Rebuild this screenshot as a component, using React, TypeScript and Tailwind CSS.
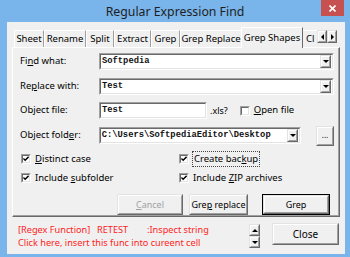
import React from "react";

const UI = "font-['Segoe_UI','Noto_Sans',sans-serif]";
const MONO = "font-['Liberation_Mono','Courier_New',monospace]";

function Sunken({ className = "", children }: { className?: string; children?: React.ReactNode }) {
  return (
    <div className={`border border-t-[#a0a0a0] border-l-[#a0a0a0] border-b-white border-r-white ${className}`}>
      <div className="h-full w-full border border-t-[#696969] border-l-[#696969] border-b-[#e3e3e3] border-r-[#e3e3e3] bg-white flex items-center">
        {children}
      </div>
    </div>
  );
}

function Raised({ className = "", children }: { className?: string; children?: React.ReactNode }) {
  return (
    <div className={`border border-t-[#e3e3e3] border-l-[#e3e3e3] border-b-[#696969] border-r-[#696969] ${className}`}>
      <div className="h-full w-full border border-t-white border-l-white border-b-[#a0a0a0] border-r-[#a0a0a0] bg-[#f0f0f0] flex items-center justify-center whitespace-nowrap">
        {children}
      </div>
    </div>
  );
}

function Tri({ dir }: { dir: "down" | "up" | "left" | "right" }) {
  const pts = {
    down: "0,0 6,0 3,3",
    up: "0,3 6,3 3,0",
    left: "3,0 3,6 0,3",
    right: "0,0 0,6 3,3",
  }[dir];
  const vert = dir === "down" || dir === "up";
  return (
    <svg width={vert ? 6 : 3} height={vert ? 3 : 6} viewBox={vert ? "0 0 6 3" : "0 0 3 6"}>
      <polygon points={pts} fill="#000" />
    </svg>
  );
}

function Combo({ value, className = "" }: { value: string; className?: string }) {
  return (
    <Sunken className={`h-[17px] ${className}`}>
      <span className={`${MONO} flex-1 pl-[1px] text-[8.8px] font-bold text-[#111] leading-none`}>{value}</span>
      <Raised className="w-[11px] h-[13px] mr-[1px]">
        <Tri dir="down" />
      </Raised>
    </Sunken>
  );
}

function Check({ checked }: { checked: boolean }) {
  return (
    <Sunken className="w-[10px] h-[10px] shrink-0">
      {checked && (
        <svg width="6" height="6" viewBox="0 0 7 7">
          <path d="M0.5 3 L2.5 5 L6.5 1" stroke="#000" strokeWidth="1.6" fill="none" />
        </svg>
      )}
    </Sunken>
  );
}

function U({ children }: { children: React.ReactNode }) {
  return <span className="underline underline-offset-[1px]">{children}</span>;
}

const tabs = [
  { label: "Sheet", w: "w-[30px]" },
  { label: "Rename", w: "w-[42px]" },
  { label: "Split", w: "w-[28px]" },
  { label: "Extract", w: "w-[37px]" },
  { label: "Grep", w: "w-[29px]" },
  { label: "Grep Replace", w: "w-[62px]" },
];

export default function App() {
  return (
    <div className={`w-[350px] h-[257px] bg-[#79b4ea] flex flex-col overflow-hidden ${UI}`}>
      {/* title bar */}
      <div className="h-[22px] shrink-0 relative flex items-center justify-center">
        <span className="text-[12.3px] text-[#1e1e1e] mt-[3px]">Regular Expression Find</span>
        <div className="absolute right-[6px] top-0 w-[23px] h-[16px] bg-[#c75050] flex items-center justify-center">
          <svg width="7" height="7" viewBox="0 0 7 7">
            <path d="M0.5 0.5 L6.5 6.5 M6.5 0.5 L0.5 6.5" stroke="#fff" strokeWidth="1.6" />
          </svg>
        </div>
      </div>

      {/* client */}
      <div className="ml-[7px] mr-[5px] mb-[3px] flex-1 bg-[#f0f0f0] flex flex-col px-[5px] text-[9.5px] text-black">
        {/* tab strip */}
        <div className="h-[25px] shrink-0 flex items-end pl-[2px] relative">
          {tabs.map((t) => (
            <div
              key={t.label}
              className={`${t.w} h-[17px] shrink-0 whitespace-nowrap border-t border-l border-t-white border-l-white border-r border-r-[#a0a0a0] flex items-center justify-center`}
            >
              {t.label}
            </div>
          ))}
          <div className="w-[62px] h-[21px] mb-[-1px] shrink-0 -mx-[1px] z-10 bg-[#f0f0f0] whitespace-nowrap border-t border-l border-t-white border-l-white border-r border-r-[#696969] flex items-center justify-center">
            Grep Shapes
          </div>
          <div className="w-[16px] h-[17px] shrink-0 border-t border-l border-t-white border-l-white overflow-hidden pl-[3px] flex items-center">
            Cl
          </div>
          <div className="absolute right-[3px] top-[8px] flex">
            <Raised className="w-[10px] h-[13px]">
              <Tri dir="left" />
            </Raised>
            <Raised className="w-[10px] h-[13px]">
              <Tri dir="right" />
            </Raised>
          </div>
        </div>

        {/* tab page */}
        <div className="h-[170px] shrink-0 border border-t-white border-l-white border-b-[#696969] border-r-[#696969]">
          <div className="h-full border-b border-r border-b-[#a0a0a0] border-r-[#a0a0a0] pl-[7px] pr-[4px] flex flex-col">
            <div className="flex items-center mt-[5px] h-[17px]">
              <span className="w-[79px]">Fi<U>n</U>d what:</span>
              <Combo value="Softpedia" className="w-[235px]" />
            </div>
            <div className="flex items-center mt-[8px] h-[17px]">
              <span className="w-[79px]">Re<U>p</U>lace with:</span>
              <Combo value="Test" className="w-[235px]" />
            </div>
            <div className="flex items-center mt-[7px] h-[17px]">
              <span className="w-[79px]">Object file:</span>
              <Sunken className="w-[108px] h-[17px]">
                <span className={`${MONO} pl-[1px] text-[8.8px] font-bold text-[#111] leading-none`}>Test</span>
              </Sunken>
              <span className="ml-[3px] text-[9px]">.xls?</span>
              <div className="ml-[12px] flex items-center gap-[4px]">
                <Check checked={false} />
                <span><U>O</U>pen file</span>
              </div>
            </div>
            <div className="flex items-center mt-[8px] h-[17px]">
              <span className="w-[79px]">Object fold<U>e</U>r:</span>
              <Combo value="C:\Users\SoftpediaEditor\Desktop" className="w-[203px]" />
              <Raised className="ml-[15px] w-[18px] h-[20px]">
                <span className="text-[8px] leading-none mt-[-2px]">...</span>
              </Raised>
            </div>
            <div className="flex items-center mt-[9px] h-[12px]">
              <div className="w-[159px] flex items-center gap-[4px] pl-[1px]">
                <Check checked />
                <span><U>D</U>istinct case</span>
              </div>
              <div className="flex items-center gap-[4px]">
                <Check checked />
                <span className="outline outline-1 outline-dotted outline-[#444] px-[1px]">Create bac<U>k</U>up</span>
              </div>
            </div>
            <div className="flex items-center mt-[7px] h-[12px]">
              <div className="w-[159px] flex items-center gap-[4px] pl-[1px]">
                <Check checked />
                <span>Include <U>s</U>ubfolder</span>
              </div>
              <div className="flex items-center gap-[4px]">
                <Check checked />
                <span>Include <U>Z</U>IP archives</span>
              </div>
            </div>
            <div className="flex items-center mt-[10px] h-[21px] text-[9px]">
              <Raised className="ml-[97px] w-[66px] h-[21px]">
                <span className="text-[#a0a0a0]"><U>C</U>ancel</span>
              </Raised>
              <Raised className="ml-[6px] w-[59px] h-[21px]">
                <span>Gre<U>p</U> replace</span>
              </Raised>
              <div className="ml-[14px] border border-black">
                <Raised className="w-[66px] h-[19px]">
                  <span>Grep</span>
                </Raised>
              </div>
            </div>
          </div>
        </div>

        {/* bottom */}
        <div className="flex-1 flex items-start">
          <div className="mt-[7px] pl-[6px] text-[9.2px] leading-[12.5px] text-[#ff1c1c] w-[237px] whitespace-nowrap">
            <div className="flex">
              <span className="w-[79px]">[Regex Function]</span>
              <span className="w-[50px]">RETEST</span>
              <span>:Inspect string</span>
            </div>
            <div>Click here, insert this func into cureent cell</div>
          </div>
          <div className="mt-[7px] flex flex-col">
            <Raised className="w-[11px] h-[12px]">
              <Tri dir="up" />
            </Raised>
            <Raised className="w-[11px] h-[12px]">
              <Tri dir="down" />
            </Raised>
          </div>
          <Raised className="mt-[6px] ml-[12px] w-[67px] h-[22px]">
            <span className="text-[10px]">Close</span>
          </Raised>
        </div>
      </div>
    </div>
  );
}
